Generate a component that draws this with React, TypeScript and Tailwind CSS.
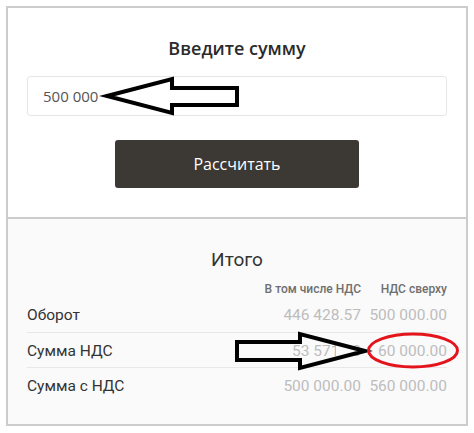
import React from "react";

const rows = [
  { label: "Оборот", a: "446 428.57", b: "500 000.00" },
  { label: "Сумма НДС", a: "53 571.43", b: "60 000.00" },
  { label: "Сумма с НДС", a: "500 000.00", b: "560 000.00" },
];

export default function App() {
  return (
    <div className="relative w-[474px] h-[433px] bg-white pt-[6px] pl-[6px]">
      <div className="w-[462px] h-[420px] border-2 border-[#cccccc] flex flex-col">
        <div
          className="flex flex-col items-center px-[19px] pt-[28px] pb-[29px] bg-white"
          style={{ fontFamily: '"Open Sans", sans-serif' }}
        >
          <div className="text-[18px] leading-6 font-semibold text-[#2b2b2b]">Введите сумму</div>
          <div className="mt-4 w-full h-10 border border-[#e6e6e6] rounded-[3px] flex items-center pl-[15px] text-[15px] text-[#555555]">
            500 000
          </div>
          <button className="mt-6 w-[244px] h-12 bg-[#3c3833] rounded-[3px] text-white text-[16px] font-normal">
            Рассчитать
          </button>
        </div>
        <div
          className="flex-1 border-t-2 border-[#cccccc] bg-[#fafafa] px-[19px] pt-[29px]"
          style={{ fontFamily: "Roboto, sans-serif" }}
        >
          <div className="text-center text-[19px] leading-6 text-[#333333]">Итого</div>
          <div className="mt-[9px] flex text-[12px] leading-4 font-medium text-[#6f6f6f]">
            <div className="flex-1" />
            <div className="w-[110px] text-right">В том числе НДС</div>
            <div className="w-[86px] text-right">НДС сверху</div>
          </div>
          {rows.map((r, i) => (
            <div
              key={r.label}
              className={`flex items-center h-[35px] pt-[3px] text-[15.5px] ${i > 0 ? "border-t border-[#e8e8e8]" : ""}`}
            >
              <div className="flex-1 text-[#333333]">{r.label}</div>
              <div className="w-[110px] text-right text-[#bdbdbd]">{r.a}</div>
              <div className="w-[86px] text-right text-[#bdbdbd]">{r.b}</div>
            </div>
          ))}
        </div>
      </div>
      <svg
        className="absolute left-0 top-0 pointer-events-none"
        width="474"
        height="433"
        viewBox="0 0 474 433"
      >
        <polygon
          points="107,96 172,79 172,88 237,88 237,105 172,105 172,113"
          fill="none"
          stroke="#000"
          strokeWidth="4"
          strokeLinejoin="miter"
        />
        <polygon points="336,343 365,351 336,359" fill="#fafafa" />
        <polygon
          points="365,351 300,334 300,342 237,342 237,360 300,360 300,368"
          fill="none"
          stroke="#000"
          strokeWidth="4"
          strokeLinejoin="miter"
        />
        <ellipse cx="413" cy="350.5" rx="44.5" ry="16.5" fill="none" stroke="#e3141c" strokeWidth="3" />
      </svg>
    </div>
  );
}
